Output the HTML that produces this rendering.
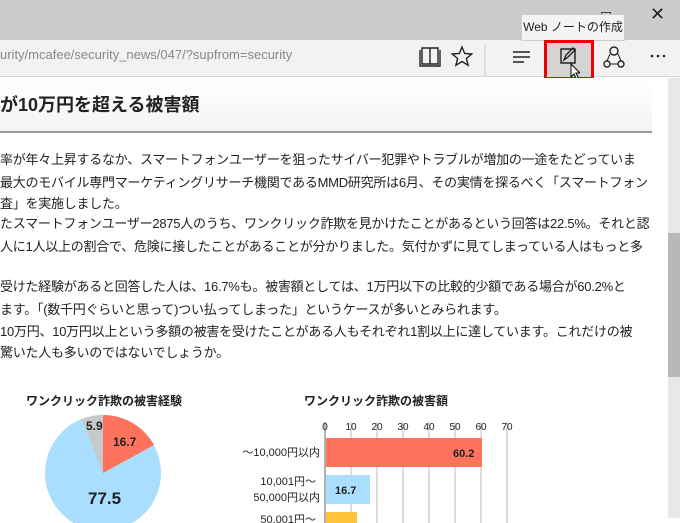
<!DOCTYPE html><html><head><meta charset="utf-8"><style>
body{margin:0;width:680px;height:523px;overflow:hidden;background:#fff;font-family:"Liberation Sans","Noto Sans CJK JP",sans-serif;position:relative}
.a{position:absolute}
.t{position:absolute;left:0;font-size:13px;color:#222;white-space:nowrap;letter-spacing:-0.25px}
</style></head><body>
<div class="a" style="left:0;top:0;width:680px;height:40px;background:#cccccc"></div>
<div class="a" style="left:0;top:40px;width:680px;height:36px;background:#f2f2f2"></div>
<div class="a" style="left:0;top:76px;width:680px;height:1px;background:#d8d8d8"></div>
<div class="a" style="left:0;top:47px;font-size:13px;color:#888">urity/mcafee/security_news/047/?supfrom=security</div>
<div class="a" style="left:650px;top:4px;font-size:18px;color:#222">✕</div>
<div class="a" style="left:601px;top:12px;width:8px;height:6px;border:1px solid #444;border-bottom:none"></div>
<div class="a" style="left:521px;top:14px;width:104px;height:27px;background:#f4f4f4;border:1px solid #ccc;box-sizing:border-box;font-size:12px;line-height:25px;text-align:center;color:#222">Web ノートの作成</div>
<svg class="a" style="left:418px;top:42px" width="260" height="36" viewBox="0 0 260 36">
<g fill="none" stroke="#222" stroke-width="1.4">
<path d="M4 6h8v16h-8zM12 6h8v16h-8zM2 8v16h20V8"/>
<path d="M44 5l2.7 6.5 7 .5-5.3 4.5 1.7 6.8-6.1-3.8-6.1 3.8 1.7-6.8-5.3-4.5 7-.5z"/>
<path d="M95 10h17M95 15h17M95 20h11"/>
<circle cx="196" cy="9" r="4"/><circle cx="189" cy="22" r="3"/><circle cx="203" cy="22" r="3"/>
<path d="M192 12l-3 7M200 12l3 7M192 22h8" stroke-width="1"/>
</g>
<path d="M67 3v32" stroke="#ccc"/>
<circle cx="234" cy="14" r="1.3" fill="#222"/><circle cx="240" cy="14" r="1.3" fill="#222"/><circle cx="246" cy="14" r="1.3" fill="#222"/>
</svg>
<div class="a" style="left:544px;top:40px;width:50px;height:40px;background:#d4d4d4;border:3px solid #ee0000;box-sizing:border-box"></div>
<svg class="a" style="left:558px;top:46px" width="22" height="40"><g fill="none" stroke="#222" stroke-width="1.4"><path d="M3 3h14v14H3z"/><path d="M6 14l2-5 7-7 2 2-7 7z"/></g><path d="M13 18v13l3-3 3 6 2-1-3-6h4z" fill="#fff" stroke="#000"/></svg>
<div class="a" style="left:0;top:78px;width:652px;height:54px;background:linear-gradient(#fff,#f3f3f3)"></div>
<div class="a" style="left:0;top:131px;width:652px;height:2px;background:#999"></div>
<div class="a" style="left:0;top:91px;font-size:18px;font-weight:bold;color:#222">が10万円を超える被害額</div>
<div class="a" style="left:668px;top:78px;width:12px;height:440px;background:#e8e8e8"></div>
<div class="a" style="left:668px;top:233px;width:12px;height:144px;background:#b8b8b8"></div>
<div class="t" style="top:149px">率が年々上昇するなか、スマートフォンユーザーを狙ったサイバー犯罪やトラブルが増加の一途をたどっていま</div>
<div class="t" style="top:172px">最大のモバイル専門マーケティングリサーチ機関であるMMD研究所は6月、その実情を探るべく「スマートフォン</div>
<div class="t" style="top:193px">査」を実施しました。</div>
<div class="t" style="top:213px">たスマートフォンユーザー2875人のうち、ワンクリック詐欺を見かけたことがあるという回答は22.5%。それと認</div>
<div class="t" style="top:236px">人に1人以上の割合で、危険に接したことがあることが分かりました。気付かずに見てしまっている人はもっと多</div>
<div class="t" style="top:276px">受けた経験があると回答した人は、16.7%も。被害額としては、1万円以下の比較的少額である場合が60.2%と</div>
<div class="t" style="top:299px">ます。「(数千円ぐらいと思って)つい払ってしまった」というケースが多いとみられます。</div>
<div class="t" style="top:321px">10万円、10万円以上という多額の被害を受けたことがある人もそれぞれ1割以上に達しています。これだけの被</div>
<div class="t" style="top:342px">驚いた人も多いのではないでしょうか。</div>
<div class="a" style="left:26px;top:392px;font-size:12px;font-weight:bold;color:#222">ワンクリック詐欺の被害経験</div>
<div class="a" style="left:304px;top:392px;font-size:12px;font-weight:bold;color:#222">ワンクリック詐欺の被害額</div>
<svg class="a" style="left:0;top:400px" width="520" height="123">
<circle cx="103" cy="73" r="58" fill="#aadeff"/>
<path d="M103 73L103 15A58 58 0 0 1 154 45z" fill="#ff735c"/>
<path d="M103 73L82 19A58 58 0 0 1 103 15z" fill="#c8c8c8"/>
<g font-family="Liberation Sans" font-weight="bold" fill="#222">
<text x="86" y="30" font-size="12">5.9</text><text x="113" y="46" font-size="12">16.7</text><text x="88" y="104" font-size="17">77.5</text>
</g>
<g stroke="#bbb"><path d="M351 22v101M377 22v101M403 22v101M429 22v101M455 22v101M481 22v101M507 22v101"/></g>
<path d="M325 22v101" stroke="#666"/>
<g font-size="10" fill="#222" text-anchor="middle" font-family="Liberation Sans"><text x="325" y="30">0</text><text x="351" y="30">10</text><text x="377" y="30">20</text><text x="403" y="30">30</text><text x="429" y="30">40</text><text x="455" y="30">50</text><text x="481" y="30">60</text><text x="507" y="30">70</text></g>
<rect x="326" y="38" width="156" height="29" fill="#ff735c"/>
<rect x="326" y="75" width="44" height="29" fill="#aadeff"/>
<rect x="326" y="112" width="31" height="29" fill="#ffc43a"/>
<g font-family="Liberation Sans" font-weight="bold" font-size="11" fill="#222"><text x="453" y="57">60.2</text><text x="335" y="94">16.7</text></g>
<g font-size="11" fill="#222" text-anchor="end" font-family="Liberation Sans,Noto Sans CJK JP"><text x="320" y="56">〜10,000円以内</text><text x="316" y="85">10,001円〜</text><text x="320" y="101">50,000円以内</text><text x="316" y="123">50,001円〜</text></g>
</svg>
</body></html>
